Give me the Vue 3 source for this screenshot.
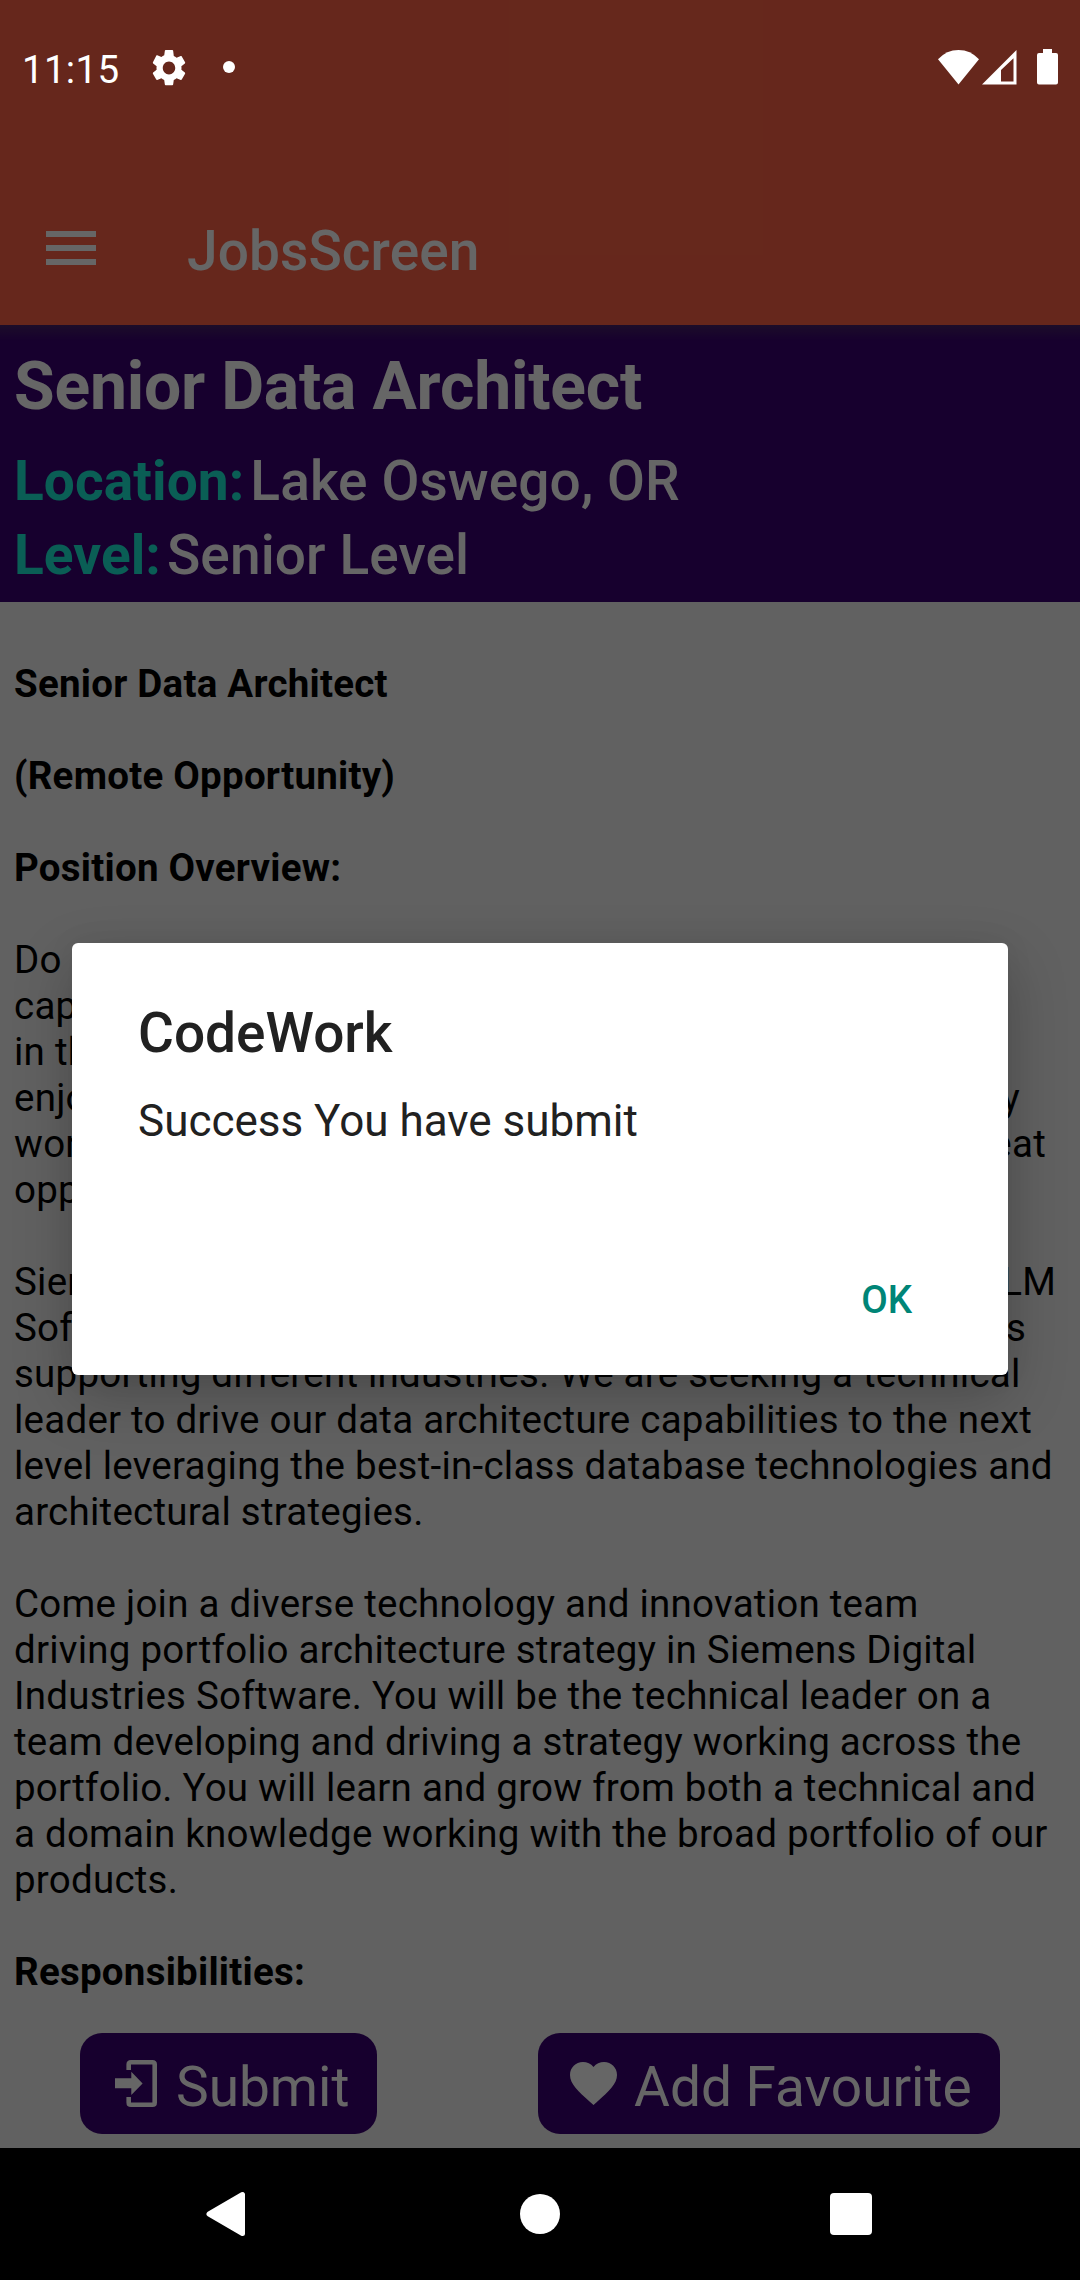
<script setup>
const blocks = [
  { bold: true, lines: [{ t: 'Senior Data Architect' }] },
  { bold: true, lines: [{ t: '(Remote Opportunity)' }] },
  { bold: true, lines: [{ t: 'Position Overview:' }] },
  {
    lines: [
      { t: 'Do' },
      { t: 'cap' },
      { t: 'in the' },
      { t: 'enjoy', end: 'y', w: 1006 },
      { t: 'work', end: 'great', w: 1032 },
      { t: 'opp' },
    ],
  },
  {
    lines: [
      { t: 'Siem', end: 'PLM', w: 1042 },
      { t: 'Soft', end: 's', w: 1012 },
      { t: 'supporting different industries. We are seeking a technical' },
      { t: 'leader to drive our data architecture capabilities to the next' },
      { t: 'level leveraging the best-in-class database technologies and' },
      { t: 'architectural strategies.' },
    ],
  },
  {
    lines: [
      { t: 'Come join a diverse technology and innovation team' },
      { t: 'driving portfolio architecture strategy in Siemens Digital' },
      { t: 'Industries Software. You will be the technical leader on a' },
      { t: 'team developing and driving a strategy working across the' },
      { t: 'portfolio. You will learn and grow from both a technical and' },
      { t: 'a domain knowledge working with the broad portfolio of our' },
      { t: 'products.' },
    ],
  },
  { bold: true, lines: [{ t: 'Responsibilities:' }] },
]
</script>

<template>
  <div class="phone">
    <div class="app">
      <header class="bar">
        <svg class="menu" width="50" height="34" viewBox="0 0 50 34">
          <path d="M0 0H50V6H0zM0 14H50V20H0zM0 28H50V34H0z" fill="#fff" />
        </svg>
        <h1>JobsScreen</h1>
      </header>

      <section class="summary">
        <h2>Senior Data Architect</h2>
        <div class="fact"><b>Location:</b><span>Lake Oswego, OR</span></div>
        <div class="fact"><b>Level:</b><span>Senior Level</span></div>
      </section>

      <main class="body">
        <p v-for="(block, i) in blocks" :key="i" :class="{ strong: block.bold }">
          <span
            v-for="line in block.lines"
            :key="line.t"
            class="line"
            :style="line.w ? { width: line.w + 'px' } : null"
          ><span>{{ line.t }}</span><span v-if="line.end">{{ line.end }}</span></span>
        </p>
      </main>

      <div class="actions">
        <button class="btn submit">
          <svg width="43" height="47" viewBox="0 0 43 47">
            <path d="M13.7 10V4.6Q13.7 2.3 16 2.3H37.4Q39.7 2.3 39.7 4.6V42.4Q39.7 44.7 37.4 44.7H16Q13.7 44.7 13.7 42.4V37" fill="none" stroke="#fff" stroke-width="4.6" />
            <path d="M0 18.3H16.3V11.7L27.6 23.4L16.3 35V28.2H0z" fill="#fff" />
          </svg>
          <span>Submit</span>
        </button>
        <button class="btn favourite">
          <svg width="47" height="43" viewBox="2 3 20 18.35" preserveAspectRatio="none">
            <path d="M12 21.35l-1.45-1.32C5.4 15.36 2 12.28 2 8.5 2 5.42 4.42 3 7.5 3c1.74 0 3.41.81 4.5 2.09C13.09 3.81 14.76 3 16.5 3 19.58 3 22 5.42 22 8.5c0 3.78-3.4 6.86-8.55 11.54L12 21.35z" fill="#fff" />
          </svg>
          <span>Add Favourite</span>
        </button>
      </div>
    </div>

    <nav class="nav">
      <svg class="back" width="40" height="46" viewBox="0 0 40 46">
        <path d="M3 23L36.5 3.5V42.5z" fill="#fff" stroke="#fff" stroke-width="5" stroke-linejoin="round" />
      </svg>
      <svg class="home" width="40" height="40" viewBox="0 0 40 40"><circle cx="20" cy="20" r="20" fill="#fff" /></svg>
      <svg class="recent" width="42" height="42" viewBox="0 0 42 42"><rect width="42" height="42" rx="4" fill="#fff" /></svg>
    </nav>

    <div class="scrim">
      <div class="dialog">
        <h3>CodeWork</h3>
        <p>Success You have submit</p>
        <button>OK</button>
      </div>
    </div>

    <div class="status">
      <span class="clock">11:15</span>
      <svg class="gear" width="34" height="36" viewBox="2.2 2 19.6 20" preserveAspectRatio="none">
        <path fill="#fff" d="M19.14 12.94c.04-.3.06-.61.06-.94 0-.32-.02-.64-.07-.94l2.03-1.58c.18-.14.23-.41.12-.61l-1.92-3.32c-.12-.22-.37-.29-.59-.22l-2.39.96c-.5-.38-1.03-.7-1.62-.94L14.4 2.4c-.04-.24-.24-.4-.48-.4h-3.84c-.24 0-.43.16-.47.4l-.36 2.55c-.59.24-1.13.57-1.62.94l-2.39-.96c-.22-.08-.47 0-.59.22L2.74 8.87c-.12.21-.08.47.12.61l2.03 1.58c-.05.3-.09.63-.09.94s.02.64.07.94l-2.03 1.58c-.18.14-.23.41-.12.61l1.92 3.32c.12.22.37.29.59.22l2.39-.96c.5.38 1.03.7 1.62.94l.36 2.55c.05.24.24.4.48.4h3.84c.24 0 .44-.16.47-.4l.36-2.55c.59-.24 1.13-.56 1.62-.94l2.39.96c.22.08.47 0 .59-.22l1.92-3.32c.12-.22.07-.47-.12-.61l-2.01-1.58zM12 15.6c-1.98 0-3.6-1.62-3.6-3.6s1.62-3.6 3.6-3.6 3.6 1.62 3.6 3.6-1.62 3.6-3.6 3.6z" />
      </svg>
      <svg class="dot" width="12" height="12" viewBox="0 0 12 12"><circle cx="6" cy="6" r="6" fill="#fff" /></svg>
      <svg class="wifi" width="41" height="35" viewBox="0 0 41 35">
        <path d="M0 9.3Q8.5 0 20.5 0T41 9.3L20.5 34.5z" fill="#fff" />
      </svg>
      <svg class="signal" width="35" height="35" viewBox="0 0 35 35">
        <path d="M0 34.5L34.5 0V34.5zM19 20V31.5H31.5V8.2z" fill="#fff" fill-rule="evenodd" />
      </svg>
      <svg class="battery" width="21" height="36" viewBox="0 0 21 36">
        <path d="M6 0H15V4H19Q21 4 21 6V33.5Q21 35.5 19 35.5H2Q0 35.5 0 33.5V6Q0 4 2 4H6z" fill="#fff" />
      </svg>
    </div>
  </div>
</template>

<style>
body {
  margin: 0;
}
</style>

<style scoped>
.phone {
  position: relative;
  display: flex;
  flex-direction: column;
  width: 1080px;
  height: 2280px;
  overflow: hidden;
  background: #000;
  font-family: Roboto, "Liberation Sans", sans-serif;
}
h1, h2, h3, p {
  margin: 0;
}
button {
  border: 0;
  font-family: inherit;
  padding: 0;
}
.app {
  display: flex;
  flex-direction: column;
  height: 2148px;
  background: #f2f2f2;
}
.bar {
  display: flex;
  align-items: flex-start;
  box-sizing: border-box;
  height: 325px;
  flex: none;
  padding: 219px 0 0 46px;
  background: #ff6347;
}
.menu {
  margin-top: 12px;
}
.bar h1 {
  margin-left: 91px;
  font-size: 55px;
  line-height: 64px;
  font-weight: 500;
  letter-spacing: 0.1px;
  color: #fff;
}
.summary {
  box-sizing: border-box;
  flex: none;
  height: 277px;
  padding: 23px 14px 0;
  background: linear-gradient(#472168 0, #3a0073 16px);
  color: #fff;
  white-space: nowrap;
}
.summary h2 {
  font-size: 66px;
  line-height: 78px;
  height: 96px;
  font-weight: 700;
  letter-spacing: -0.2px;
}
.fact {
  display: flex;
  gap: 6px;
  font-size: 55px;
  line-height: 74px;
  font-weight: 500;
  letter-spacing: 0.1px;
}
.fact b {
  font-weight: 700;
  color: #1bebd4;
}
.body {
  flex: 1;
  min-height: 0;
  overflow: hidden;
  padding: 59px 14px 0;
  font-size: 38.5px;
  line-height: 46px;
  letter-spacing: 0.24px;
  color: #000;
}
.body p {
  margin-bottom: 46px;
}
.strong {
  font-weight: 700;
}
.line {
  display: flex;
  justify-content: space-between;
  white-space: nowrap;
}
.actions {
  display: flex;
  justify-content: space-between;
  flex: none;
  padding: 0 80px 14px;
}
.btn {
  display: flex;
  align-items: flex-start;
  box-sizing: border-box;
  height: 101px;
  border-radius: 22px;
  background: #3a0073;
  color: #fff;
  font-size: 55px;
  line-height: 64px;
  white-space: nowrap;
}
.submit {
  width: 297px;
  padding: 27px 0 0 35px;
}
.favourite {
  width: 462px;
  padding: 29px 0 0 32px;
}
.submit span {
  margin: -5px 0 0 18px;
}
.favourite span {
  margin: -7px 0 0 17px;
}
.nav {
  position: relative;
  z-index: 2;
  display: flex;
  align-items: center;
  box-sizing: border-box;
  height: 132px;
  padding-left: 206px;
  background: #000;
}
.home {
  margin-left: 274px;
}
.recent {
  margin-left: 270px;
}
.scrim {
  position: absolute;
  inset: 0;
  display: flex;
  align-items: flex-start;
  justify-content: center;
  padding-top: 943px;
  background: rgba(0, 0, 0, 0.6);
}
.dialog {
  display: flex;
  flex-direction: column;
  box-sizing: border-box;
  width: 936px;
  height: 432px;
  padding: 58px 96px 0 66px;
  border-radius: 6px;
  background: #fff;
  box-shadow: 0 22px 60px rgba(0, 0, 0, 0.22), 0 0 30px rgba(0, 0, 0, 0.06);
  color: #212121;
}
.dialog h3 {
  font-size: 55px;
  line-height: 64px;
  font-weight: 500;
}
.dialog p {
  margin-top: 30px;
  font-size: 44px;
  line-height: 52px;
}
.dialog button {
  align-self: flex-end;
  margin-top: 130px;
  background: none;
  color: #008577;
  font-size: 38.5px;
  line-height: 46px;
  font-weight: 500;
}
.status {
  position: absolute;
  top: 0;
  left: 0;
  display: flex;
  align-items: flex-start;
  width: 1080px;
  height: 100px;
  color: #fff;
}
.clock {
  width: 130px;
  margin: 47px 0 0 22px;
  font-size: 38.5px;
  line-height: 46px;
  letter-spacing: 0.3px;
}
.gear {
  margin-top: 50px;
}
.dot {
  margin: 61px 0 0 37px;
}
.wifi {
  margin: 50px 0 0 703px;
}
.signal {
  margin: 50px 0 0 3px;
}
.battery {
  margin: 49px 0 0 20px;
}
</style>
